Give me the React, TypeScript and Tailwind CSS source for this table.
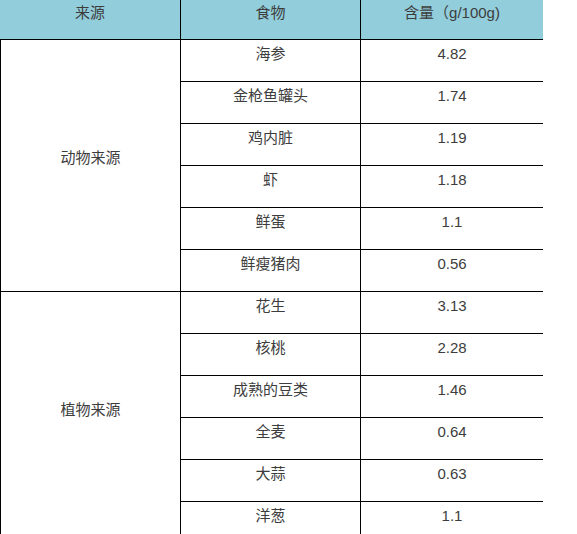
const groups = [
  {
    source: "动物来源",
    items: [
      ["海参", "4.82"],
      ["金枪鱼罐头", "1.74"],
      ["鸡内脏", "1.19"],
      ["虾", "1.18"],
      ["鲜蛋", "1.1"],
      ["鲜瘦猪肉", "0.56"],
    ],
  },
  {
    source: "植物来源",
    items: [
      ["花生", "3.13"],
      ["核桃", "2.28"],
      ["成熟的豆类", "1.46"],
      ["全麦", "0.64"],
      ["大蒜", "0.63"],
      ["洋葱", "1.1"],
    ],
  },
];

export default function App() {
  return (
    <div
      className="w-[577px] h-[534px] overflow-hidden bg-white text-[15px] leading-[18px] text-[#3d3d3d]"
      style={{ fontFamily: '"Liberation Sans", "Noto Sans CJK SC", sans-serif' }}
    >
      <div className="w-[543px]">
        {/* header */}
        <div className="flex h-[40px] bg-[#92cddc] border-b border-black">
          <div className="w-[181px] border-r border-black text-center pt-[4px]">来源</div>
          <div className="w-[180px] border-r border-black text-center pt-[4px]">食物</div>
          <div className="w-[182px] text-center pt-[4px]">含量（g/100g)</div>
        </div>

        {groups.map((g) => (
          <div key={g.source} className="flex">
            <div className="w-[181px] border-l border-r border-b border-black flex items-center justify-center pb-[16px]">
              {g.source}
            </div>
            <div className="flex flex-col">
              {g.items.map(([food, amount]) => (
                <div key={food} className="flex h-[42px] border-b border-black">
                  <div className="w-[180px] border-r border-black text-center pt-[5px]">{food}</div>
                  <div className="w-[182px] text-center pt-[5px]">{amount}</div>
                </div>
              ))}
            </div>
          </div>
        ))}
      </div>
    </div>
  );
}
